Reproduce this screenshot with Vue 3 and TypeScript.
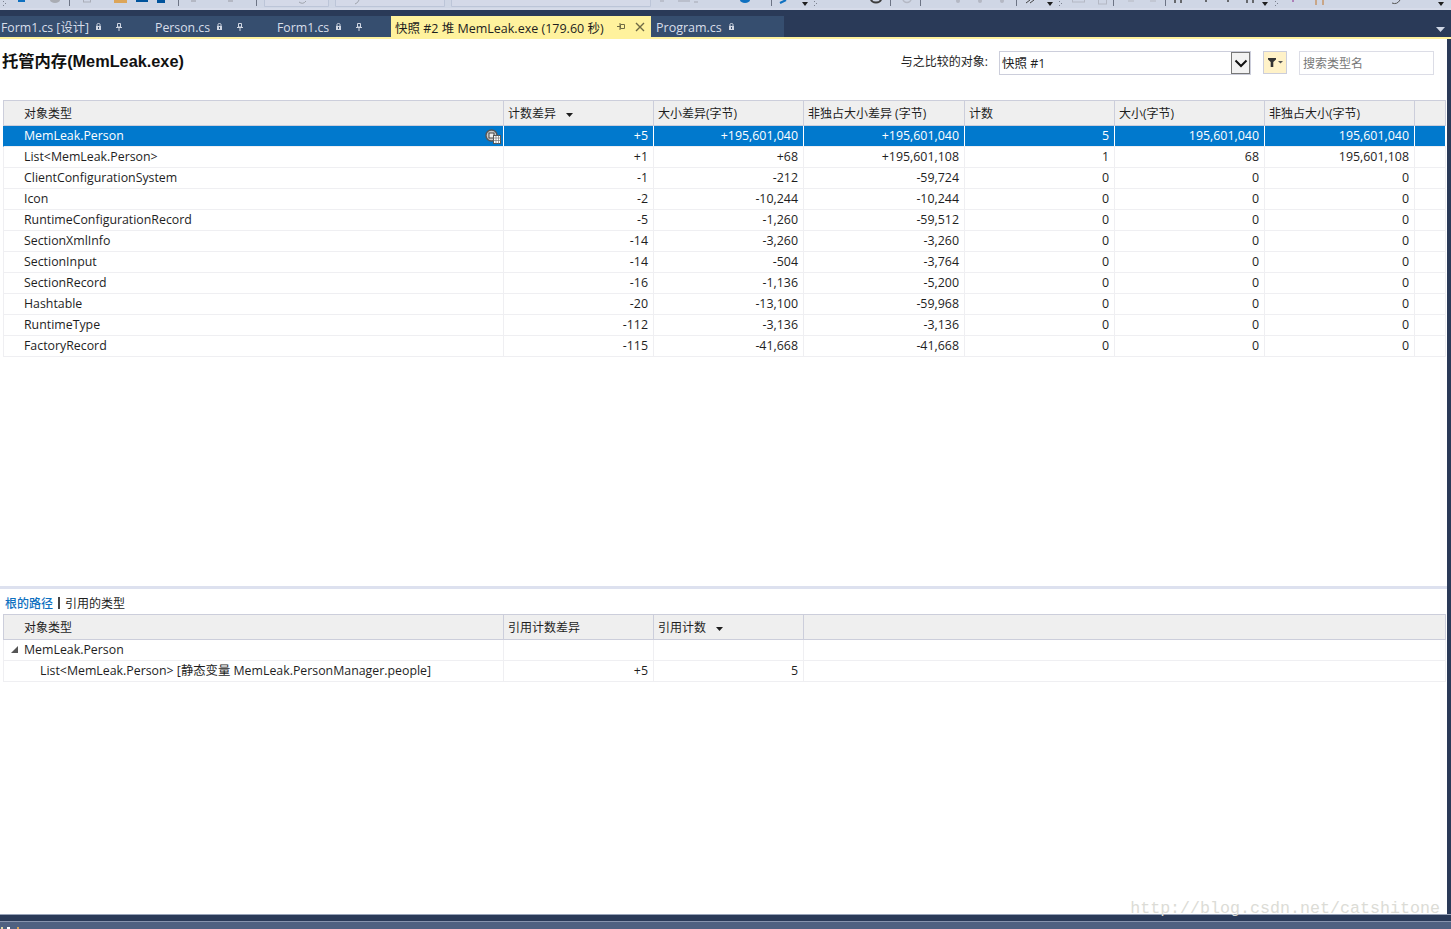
<template>
  <div class="ide">
    <!-- only the lower edge of the toolbar is visible in the shot -->
    <svg class="toolbar" width="1451" height="10" viewBox="0 0 1451 10">
      <rect width="1451" height="8" fill="#cfd6e5" />
      <rect y="8" width="1451" height="2" fill="#d6dbe9" />
      <rect x="18" y="0" width="7" height="2" fill="#0e70c0" />
      <ellipse cx="55" cy="0" rx="5" ry="3" fill="#a9acb3" />
      <rect v-for="x in separators" :key="x" :x="x" y="0" width="1" height="6" fill="#6d7485" />
      <g fill="#7c8290">
        <rect v-for="g in grippers" :key="g" :x="g" y="1" width="1" height="1" />
        <rect v-for="g in grippers" :key="'b' + g" :x="g + 2" y="3" width="1" height="1" />
        <rect v-for="g in grippers" :key="'c' + g" :x="g" y="5" width="1" height="1" />
      </g>
      <rect x="83.5" y="-1" width="7" height="3" fill="none" stroke="#a9adb8" />
      <rect x="114" y="0" width="13" height="3" fill="#dca559" />
      <rect x="136" y="0" width="12" height="2" fill="#00539c" />
      <rect x="157" y="0" width="8" height="3" fill="#00539c" />
      <rect x="191" y="0" width="5" height="2" fill="#b4b8c4" />
      <rect x="228" y="0" width="5" height="2" fill="#b4b8c4" />
      <path d="M264.5 0V6.5H328.5V0M335.5 0V6.5H444.5V0M451.5 0V6.5H650.5V0" fill="#d4d9e8" stroke="#bcc5d8" />
      <path d="M299 2Q303 5 306 1M355 4Q358 3 359 0" fill="none" stroke="#9fa4ad" />
      <path d="M660 1H664M678 1H690M694 2H698" stroke="#b4b8c4" stroke-width="1.5" />
      <ellipse cx="745" cy="0" rx="5" ry="3" fill="#0e70c0" />
      <path d="M780 3L786 0" stroke="#0e70c0" stroke-width="2" />
      <path d="M802 2H808L805 6Z M1047 2H1053L1050 6Z M1262 2H1268L1265 6Z M1438 2H1444L1441 6Z" fill="#1e1e1e" />
      <ellipse cx="876" cy="-1" rx="5" ry="3.5" fill="none" stroke="#3b3b3b" stroke-width="2" />
      <ellipse cx="907" cy="-1" rx="4" ry="3.5" fill="none" stroke="#b4b8c4" stroke-width="1.5" />
      <circle cx="958" cy="1" r="2" fill="#b4b8c4" />
      <circle cx="980" cy="1" r="2" fill="#b4b8c4" />
      <circle cx="1002" cy="1" r="2" fill="#b4b8c4" />
      <path d="M1026 3L1030 0M1030 3L1034 0" stroke="#444" />
      <rect x="1072.5" y="-1" width="12" height="3" fill="none" stroke="#b4b8c4" />
      <rect x="1098.5" y="-1" width="8" height="5" fill="none" stroke="#b4b8c4" />
      <path d="M1128 1H1134M1150 1H1156" stroke="#c2c7d3" stroke-width="2" />
      <path d="M1175 3V0M1181 3V0M1206 2V0M1228 2V0M1247 3V0M1253 3V0" stroke="#444" stroke-width="1.5" />
      <path d="M1293 2V0" stroke="#8a2a8a" />
      <path d="M1316 5V0M1323 5V0" stroke="#c2762a" />
      <path d="M1392 3Q1397 5 1400 0" fill="none" stroke="#555" />
    </svg>

    <div class="tab-well">
      <div v-for="t in tabs" :key="t.label" class="tab" :class="{ active: t.active }" :style="{ width: t.width + 'px' }">
        <span class="tab-label">{{ t.label }}</span>
        <svg v-if="!t.active" class="lock" width="5" height="7" viewBox="0 0 5 7">
          <path d="M1 3V1.5Q1 .5 2.5 .5T4 1.5V3" fill="none" stroke="#d0d6e2" />
          <rect x="0" y="3" width="5" height="4" fill="#d0d6e2" />
          <rect x="2" y="4" width="1" height="2" fill="#364e6f" />
        </svg>
        <svg v-if="t.pin && !t.active" class="pin" width="6" height="8" viewBox="0 0 6 8">
          <path d="M1.5 .5H4.5V4H1.5ZM0 4.5H6M3 4.5V8" fill="none" stroke="#d0d6e2" />
        </svg>
        <template v-if="t.active">
          <svg class="pin-side" width="8" height="7" viewBox="0 0 8 7">
            <path d="M3.5 1.5V5.5H7.5V1.5ZM3.5 3.5H0M3 0V7" fill="none" stroke="#6f6a45" />
          </svg>
          <svg class="close" width="10" height="10" viewBox="0 0 10 10">
            <path d="M1 1L9 9M9 1L1 9" stroke="#6f6a45" stroke-width="1.4" />
          </svg>
        </template>
      </div>
      <svg class="well-menu" width="9" height="5" viewBox="0 0 9 5"><path d="M0 0H9L4.5 5Z" fill="#cfd6e5" /></svg>
    </div>
    <div class="tab-rule"></div>

    <main class="doc">
      <section class="upper">
        <header class="doc-head">
          <h1 class="doc-title">托管内存(MemLeak.exe)</h1>
          <div class="doc-tools">
            <span class="compare-label">与之比较的对象:</span>
            <div class="combo">
              <span class="combo-text">快照 #1</span>
              <span class="combo-btn">
                <svg width="14" height="9" viewBox="0 0 14 9"><path d="M1.5 1.5L7 7L12.5 1.5" fill="none" stroke="#111" stroke-width="2" /></svg>
              </span>
            </div>
            <button class="filter-btn">
              <svg width="16" height="9" viewBox="0 0 16 9">
                <path d="M0 0H8V1.5L5.3 4V9H2.7V4L0 1.5Z" fill="#333" />
                <path d="M10 3H15L12.5 5.5Z" fill="#555" />
              </svg>
            </button>
            <div class="search">搜索类型名</div>
          </div>
        </header>

        <div class="grid main-grid">
          <div class="row head">
            <div v-for="c in mainCols" :key="c.label" class="cell" :style="{ width: c.width + 'px' }" :class="{ first: c.first }">
              {{ c.label }}
              <svg v-if="c.sorted" class="sort" width="7" height="4" viewBox="0 0 7 4"><path d="M0 0H7L3.5 4Z" fill="#1e1e1e" /></svg>
            </div>
            <div class="cell filler"></div>
          </div>
          <div v-for="(r, i) in mainRows" :key="r[0]" class="row" :class="{ selected: i === 0 }">
            <div v-for="(v, j) in r" :key="j" class="cell" :class="j === 0 ? 'first' : 'num'" :style="{ width: mainCols[j].width + 'px' }">
              {{ v }}
              <svg v-if="i === 0 && j === 0" class="snap-icon" width="16" height="15" viewBox="0 0 16 15">
                <circle cx="6.5" cy="6.5" r="5.5" fill="#c9c9c9" stroke="#555" stroke-width="1.4" />
                <rect x="4" y="4" width="5" height="5" fill="#eee" stroke="#444" />
                <rect x="8.5" y="6.5" width="7" height="8" fill="#fff" stroke="#555" />
                <path d="M8.5 9H15.5M8.5 11.5H15.5M11 6.5V14.5M13.5 6.5V14.5" stroke="#777" stroke-width=".7" />
              </svg>
            </div>
            <div class="cell filler"></div>
          </div>
        </div>
      </section>

      <div class="splitter"></div>

      <section class="lower">
        <div class="subnav">
          <span class="subnav-on">根的路径</span>
          <span class="subnav-bar"></span>
          <span>引用的类型</span>
        </div>
        <div class="grid">
          <div class="row head lower-head">
            <div v-for="c in refCols" :key="c.label" class="cell" :style="{ width: c.width + 'px' }" :class="{ first: c.first }">
              {{ c.label }}
              <svg v-if="c.sorted" class="sort" width="7" height="4" viewBox="0 0 7 4"><path d="M0 0H7L3.5 4Z" fill="#1e1e1e" /></svg>
            </div>
            <div class="cell filler"></div>
          </div>
          <div class="row">
            <div class="cell first tree" :style="{ width: refCols[0].width + 'px' }">
              <svg class="twisty" width="7" height="7" viewBox="0 0 7 7"><path d="M7 0V7H0Z" fill="#555" /></svg>
              MemLeak.Person
            </div>
            <div class="cell num" :style="{ width: refCols[1].width + 'px' }"></div>
            <div class="cell num" :style="{ width: refCols[2].width + 'px' }"></div>
            <div class="cell filler"></div>
          </div>
          <div class="row">
            <div class="cell first child" :style="{ width: refCols[0].width + 'px' }">List&lt;MemLeak.Person&gt; [静态变量 MemLeak.PersonManager.people]</div>
            <div class="cell num" :style="{ width: refCols[1].width + 'px' }">+5</div>
            <div class="cell num" :style="{ width: refCols[2].width + 'px' }">5</div>
            <div class="cell filler"></div>
          </div>
        </div>
      </section>
      <div class="watermark">http://blog.csdn.net/catshitone</div>
    </main>

    <footer class="status-gap"></footer>
    <div class="status">
      <svg class="status-icons" width="22" height="2" viewBox="0 0 22 2">
        <rect x="1" width="2" height="2" fill="#e4d9a8" />
        <rect x="7" width="3" height="2" fill="#fff" />
        <rect x="17" width="2" height="2" fill="#dca559" />
      </svg>
    </div>
  </div>
</template>

<script setup lang="ts">
interface Tab {
  label: string
  width: number
  pin?: boolean
  active?: boolean
}

interface Col {
  label: string
  width: number
  first?: boolean
  sorted?: boolean
}

const separators = [69, 178, 256, 771, 890, 920, 1016, 1113, 1165]
const grippers = [3, 814, 1059, 1275]

const tabs: Tab[] = [
  { label: 'Form1.cs [设计]', width: 155, pin: true },
  { label: 'Person.cs', width: 122, pin: true },
  { label: 'Form1.cs', width: 114, pin: true },
  { label: '快照 #2 堆 MemLeak.exe (179.60 秒)', width: 260, active: true },
  { label: 'Program.cs', width: 133 }
]

const mainCols: Col[] = [
  { label: '对象类型', width: 500, first: true },
  { label: '计数差异', width: 150, sorted: true },
  { label: '大小差异(字节)', width: 150 },
  { label: '非独占大小差异 (字节)', width: 161 },
  { label: '计数', width: 150 },
  { label: '大小(字节)', width: 150 },
  { label: '非独占大小(字节)', width: 150 }
]

const refCols: Col[] = [
  { label: '对象类型', width: 500, first: true },
  { label: '引用计数差异', width: 150 },
  { label: '引用计数', width: 150, sorted: true }
]

const mainRows: string[][] = [
  ['MemLeak.Person', '+5', '+195,601,040', '+195,601,040', '5', '195,601,040', '195,601,040'],
  ['List<MemLeak.Person>', '+1', '+68', '+195,601,108', '1', '68', '195,601,108'],
  ['ClientConfigurationSystem', '-1', '-212', '-59,724', '0', '0', '0'],
  ['Icon', '-2', '-10,244', '-10,244', '0', '0', '0'],
  ['RuntimeConfigurationRecord', '-5', '-1,260', '-59,512', '0', '0', '0'],
  ['SectionXmlInfo', '-14', '-3,260', '-3,260', '0', '0', '0'],
  ['SectionInput', '-14', '-504', '-3,764', '0', '0', '0'],
  ['SectionRecord', '-16', '-1,136', '-5,200', '0', '0', '0'],
  ['Hashtable', '-20', '-13,100', '-59,968', '0', '0', '0'],
  ['RuntimeType', '-112', '-3,136', '-3,136', '0', '0', '0'],
  ['FactoryRecord', '-115', '-41,668', '-41,668', '0', '0', '0']
]
</script>

<style>
html,
body {
  overflow: hidden;
}
</style>

<style scoped>
.ide {
  width: 1451px;
  height: 929px;
  display: flex;
  flex-direction: column;
  overflow: hidden;
  background: #2a3a58;
  font-family: "Open Sans", "Noto Sans CJK SC", sans-serif;
  font-size: 12.35px;
  color: #1e1e1e;
}

.toolbar {
  display: block;
  flex: none;
}

.tab-well {
  position: relative;
  flex: none;
  height: 27px;
  padding-top: 6px;
  box-sizing: border-box;
  display: flex;
}

.tab {
  height: 21px;
  flex: none;
  box-sizing: border-box;
  display: flex;
  align-items: center;
  background: #364e6f;
  color: #d8deea;
  white-space: nowrap;
  font-size: 12.3px;
}

.tab-label {
  margin-left: 1px;
  padding-top: 1px;
}

.tab:nth-child(2) .tab-label,
.tab:nth-child(3) .tab-label {
  margin-left: 0;
}

.tab.active {
  background: #fff29d;
  color: #1e1e1e;
  padding-left: 3px;
  font-size: 12.5px;
}

.tab:nth-child(5) {
  padding-left: 4px;
  font-size: 12.5px;
}

.lock {
  margin-left: 7px;
}

.pin {
  margin-left: 15px;
}

.pin-side {
  margin-left: 13px;
}

.close {
  margin-left: 10px;
}

.well-menu {
  position: absolute;
  right: 6px;
  top: 17px;
}

.tab-rule {
  flex: none;
  height: 2px;
  background: #fff29d;
}

.doc {
  position: relative;
  flex: none;
  height: 875px;
  margin-right: 4px;
  background: #fff;
  display: flex;
  flex-direction: column;
}

.upper {
  flex: none;
  height: 547px;
}

.doc-head {
  height: 61px;
  box-sizing: border-box;
  padding: 12px 13px 0 2px;
  display: flex;
  justify-content: space-between;
  align-items: flex-start;
}

.doc-title {
  margin: 0;
  font-size: 16.3px;
  line-height: 21px;
  font-weight: 700;
  color: #111;
  font-family: "Liberation Sans", "Noto Sans CJK SC", sans-serif;
}

.doc-tools {
  display: flex;
  align-items: flex-start;
}

.compare-label {
  font-size: 12px;
  line-height: 20px;
  margin-top: 1px;
  margin-right: 11px;
}

.combo {
  width: 252px;
  height: 24px;
  box-sizing: border-box;
  border: 1px solid #ccceDB;
  display: flex;
  justify-content: space-between;
}

.combo-text {
  padding-left: 2px;
  line-height: 24px;
  font-size: 12.5px;
}

.combo-btn {
  width: 19px;
  height: 22px;
  box-sizing: border-box;
  border: 1px solid #777;
  background: #f2f2f2;
  display: flex;
  align-items: center;
  justify-content: center;
}

.filter-btn {
  width: 24px;
  height: 23px;
  margin-left: 12px;
  padding: 0 0 0 2px;
  border: 1px solid #ccceDB;
  background: #fff2c8;
  display: flex;
  align-items: center;
  justify-content: center;
}

.search {
  width: 135px;
  height: 24px;
  box-sizing: border-box;
  margin-left: 12px;
  padding-left: 3px;
  border: 1px solid #dcdde6;
  color: #777;
  font-size: 12px;
  line-height: 24px;
}

.grid {
  margin-left: 3px;
  width: 1443px;
}

.row {
  display: flex;
  height: 21px;
  box-sizing: border-box;
  border-bottom: 1px solid #efeff2;
  border-left: 1px solid #efeff2;
}

.row.head {
  height: 26px;
  background: #efefef;
  border-top: 1px solid #ccceDB;
  border-bottom: 1px solid #ccceDB;
  border-left: 1px solid #ccceDB;
  font-size: 12px;
}

.cell {
  position: relative;
  flex: none;
  box-sizing: border-box;
  height: 100%;
  padding: 0 4px;
  border-right: 1px solid #efeff2;
  line-height: 19px;
  white-space: nowrap;
}

.head .cell {
  line-height: 26px;
  border-right: 1px solid #ccceDB;
}

.cell.first {
  padding-left: 20px;
}

.cell.num {
  text-align: right;
  padding-right: 5px;
  font-size: 12.4px;
}

.cell.filler {
  flex: 1;
  padding: 0;
  border-right: 1px solid #efeff2;
}

.head .cell.filler {
  border-right: 1px solid #ccceDB;
}

.selected {
  background: #0179cd;
  color: #fff;
  border-left-color: #0179cd;
}

.selected .cell {
  border-right-color: #fff;
}

.sort {
  margin-left: 7px;
  vertical-align: 1px;
}

.snap-icon {
  position: absolute;
  right: 2px;
  top: 3px;
}

.splitter {
  flex: none;
  height: 3px;
  background: #dde1ef;
}

.lower {
  flex: 1;
}

.subnav {
  height: 25px;
  box-sizing: border-box;
  padding: 2px 0 0 5px;
  display: flex;
  align-items: center;
  font-size: 12px;
}

.subnav-on {
  color: #0e70c0;
  font-weight: 500;
}

.subnav-bar {
  width: 2px;
  height: 12px;
  margin: 0 5px;
  background: #444;
}

.twisty {
  position: absolute;
  left: 7px;
  top: 6px;
}

.cell.child {
  padding-left: 36px;
}

.watermark {
  position: absolute;
  right: 7px;
  bottom: -5px;
  font-family: "Liberation Mono", monospace;
  font-size: 16.67px;
  line-height: 20px;
  color: #dcdcd6;
  z-index: 1;
}

.status-gap {
  flex: none;
  height: 7px;
  border-top: 1px solid #97a2b8;
  box-sizing: border-box;
  background: #2a3a58;
}

.status {
  position: relative;
  flex: 1;
  border-top: 1px solid #8794ae;
  background: #4f6181;
}

.status-icons {
  position: absolute;
  left: 0;
  bottom: 0;
}
</style>
